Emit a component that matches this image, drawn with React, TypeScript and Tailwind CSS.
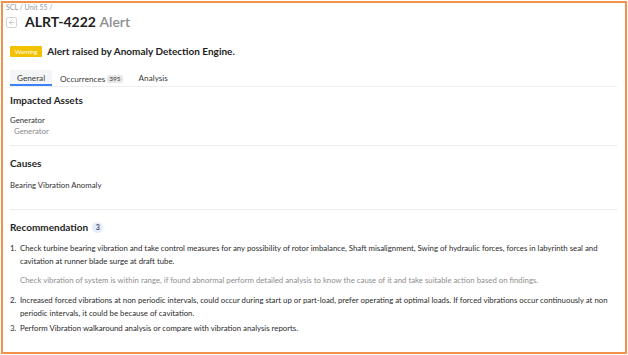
import {ArrowLeft} from 'lucide-react'

const recs = [
  {
    text: 'Check turbine bearing vibration and take control measures for any possibility of rotor imbalance, Shaft misalignment, Swing of hydraulic forces, forces in labyrinth seal and cavitation at runner blade surge at draft tube.',
    note: 'Check vibration of system is within range, if found abnormal perform detailed analysis to know the cause of it and take suitable action based on findings.',
  },
  {
    text: 'Increased forced vibrations at non periodic intervals, could occur during start up or part-load, prefer operating at optimal loads. If forced vibrations occur continuously at non periodic intervals, it could be because of cavitation.',
  },
  {
    text: 'Perform Vibration walkaround analysis or compare with vibration analysis reports.',
  },
]

export default function App() {
  return (
    <div className="h-[355px] w-[628px] bg-white p-px font-['Lato',sans-serif]">
      <div className="h-[353px] border-2 border-[#f0924c] pl-[3px] pr-[8px]">
        <div className="text-[7px] leading-[8px] text-[#9a9a9a]">SCL / Unit 55 /</div>
        <div className="mt-[3px] flex h-[16px] items-center gap-[8px]">
          <button className="flex h-[11px] w-[11px] items-center justify-center rounded-[2px] border border-[#d4d4d4] text-[#8a8a8a]">
            <ArrowLeft size={7} strokeWidth={1.5} />
          </button>
          <h1 className="text-[14px] font-bold leading-[16px] text-[#222]">
            ALRT-4222 <span className="font-semibold text-[#8e8e8e]">Alert</span>
          </h1>
        </div>
        <div className="pl-[4px]">
          <div className="mt-[15px] flex h-[12px] items-center gap-[5px]">
            <span className="rounded-[1px] bg-[#f2c200] px-[5px] text-[6px] leading-[11px] text-white">Warning</span>
            <span className="text-[10px] font-bold text-[#1d1d1d]">Alert raised by Anomaly Detection Engine.</span>
          </div>
          <div className="mt-[13px] flex border-b border-[#eeeeee] text-[8.2px] text-[#3a3a3a]">
            <div className="border-b-2 border-[#3b82f6] bg-[#f4f5f7] px-[7px] pb-px pt-[3px] leading-[10px]">General</div>
            <div className="flex items-center gap-[2px] px-[8px] pb-px pt-[3px] leading-[10px]">
              Occurrences
              <span className="rounded-[2px] bg-[#e8e8e8] px-[2px] text-[6.5px] leading-[8px]">395</span>
            </div>
            <div className="px-[8px] pb-px pt-[3px] leading-[10px]">Analysis</div>
          </div>

          <section className="border-b border-[#ececec] pb-[9px] pt-[7px]">
            <h2 className="text-[10px] font-bold leading-[12px] text-[#1f1f1f]">Impacted Assets</h2>
            <div className="mt-[9px] text-[7.8px] leading-[10px] text-[#333]">Generator</div>
            <div className="mt-px pl-[4px] text-[7.8px] leading-[10px] text-[#8a8a8a]">Generator</div>
          </section>

          <section className="border-b border-[#ececec] pb-[19px] pt-[11px]">
            <h2 className="text-[10px] font-bold leading-[12px] text-[#1f1f1f]">Causes</h2>
            <div className="mt-[11px] text-[7.8px] leading-[10px] text-[#333]">Bearing Vibration Anomaly</div>
          </section>

          <section className="pt-[11px]">
            <h2 className="flex items-center gap-[4px] text-[10px] font-bold leading-[12px] text-[#1f1f1f]">
              Recommendation
              <span className="flex h-[11px] w-[11px] items-center justify-center rounded-full bg-[#e4edfa] text-[7px] font-bold text-[#3a4a6a]">3</span>
            </h2>
            <ol className="mt-[9px] text-[7.8px] leading-[13px] text-[#2b2b2b]">
              {recs.map((r, i) => (
                <li key={i} className="mb-[2px] flex">
                  <span className="w-[10px] shrink-0">{i + 1}.</span>
                  <div>
                    <div>{r.text}</div>
                    {r.note && <div className="mb-[5px] mt-[6px] text-[#8e8e8e]">{r.note}</div>}
                  </div>
                </li>
              ))}
            </ol>
          </section>
        </div>
      </div>
    </div>
  )
}
